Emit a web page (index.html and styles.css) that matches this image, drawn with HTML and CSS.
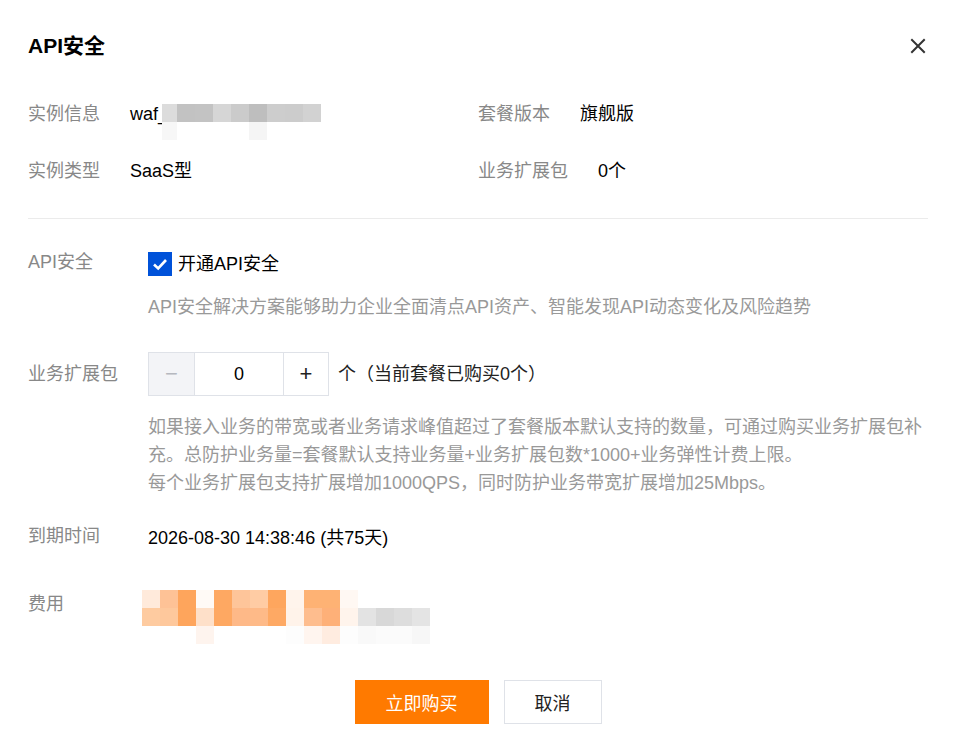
FILE: index.html
```html
<!DOCTYPE html>
<html lang="zh-CN">

<head>
    <meta charset="UTF-8">
    <title>API安全</title>
    <link rel="stylesheet" href="styles.css">
</head>

<body>
    <div class="dialog">
        <div class="dialog-head">
            <h2 class="title">API安全</h2>
            <span class="close">
                <svg width="16" height="16" viewBox="0 0 16 16">
                    <path d="M2 2L14 14M14 2L2 14" stroke="#333" stroke-width="2" stroke-linecap="square" fill="none"/>
                </svg>
            </span>
        </div>

        <!-- 实例信息 -->
        <div class="info">
            <div class="info-item">
                <span class="info-label">实例信息</span>
                <span class="info-value">waf_<span class="mosaic mosaic-id">
                    <i style="background:#dcdcdc"></i><i style="background:#c2c2c2"></i><i style="background:#c3c3c3"></i><i style="background:#d6d6d6"></i><i style="background:#cbcbcb"></i><i style="background:#bebebe"></i><i style="background:#cdcdcd"></i><i style="background:#cccccc"></i><i style="background:#d2d2d2"></i>
                    <i style="background:#f7f7f7"></i><i></i><i></i><i></i><i></i><i style="background:#f5f5f5"></i><i></i><i></i><i></i>
                </span></span>
            </div>
            <div class="info-item">
                <span class="info-label">套餐版本</span>
                <span class="info-value">旗舰版</span>
            </div>
            <div class="info-item">
                <span class="info-label">实例类型</span>
                <span class="info-value">SaaS型</span>
            </div>
            <div class="info-item">
                <span class="info-label">业务扩展包</span>
                <span class="info-value">0个</span>
            </div>
        </div>

        <!-- 表单 -->
        <div class="form">
            <div class="form-row">
                <div class="form-label">API安全</div>
                <div class="form-ctrl">
                    <label class="checkbox">
                        <span class="check-box">
                            <svg width="24" height="24" viewBox="0 0 24 24">
                                <path d="M6 12.5L10.2 16.5L18 8" stroke="#fff" stroke-width="2.6" fill="none"/>
                            </svg>
                        </span>
                        <span>开通API安全</span>
                    </label>
                    <p class="desc desc-api">API安全解决方案能够助力企业全面清点API资产、智能发现API动态变化及风险趋势</p>
                </div>
            </div>

            <div class="form-row row-pack">
                <div class="form-label label-mid">业务扩展包</div>
                <div class="form-ctrl">
                    <div class="stepper-line">
                        <div class="stepper">
                            <span class="step-btn minus">−</span>
                            <span class="step-input">0</span>
                            <span class="step-btn plus">+</span>
                        </div>
                        <span class="unit">个（当前套餐已购买0个）</span>
                    </div>
                    <p class="desc desc-help">如果接入业务的带宽或者业务请求峰值超过了套餐版本默认支持的数量，可通过购买业务扩展包补充。总防护业务量=套餐默认支持业务量+业务扩展包数*1000+业务弹性计费上限。<br>每个业务扩展包支持扩展增加1000QPS，同时防护业务带宽扩展增加25Mbps。</p>
                </div>
            </div>

            <div class="form-row row-expire">
                <div class="form-label">到期时间</div>
                <div class="form-ctrl text">2026-08-30 14:38:46 (共75天)</div>
            </div>

            <div class="form-row row-fee">
                <div class="form-label label-fee">费用</div>
                <div class="form-ctrl">
                    <span class="mosaic mosaic-fee">
                        <i style="background:#ffeadb"></i><i style="background:#fec296"></i><i style="background:#fea55c"></i><i style="background:#fffaf6"></i><i style="background:#fea862"></i><i style="background:#fec59a"></i><i style="background:#ffcca4"></i><i style="background:#fea65e"></i><i style="background:#fff4ec"></i><i style="background:#feb274"></i><i style="background:#feb274"></i><i style="background:#fff8f3"></i><i></i><i></i><i></i><i></i>
                        <i style="background:#fecba0"></i><i style="background:#fec89c"></i><i style="background:#fea55c"></i><i style="background:#fee0c9"></i><i style="background:#fea862"></i><i style="background:#feb988"></i><i style="background:#feba88"></i><i style="background:#fea964"></i><i style="background:#fff3ea"></i><i style="background:#febd8e"></i><i style="background:#feb078"></i><i style="background:#fff4ec"></i><i style="background:#e3e3e3"></i><i style="background:#d8d8d8"></i><i style="background:#dddddd"></i><i style="background:#e4e4e4"></i>
                        <i></i><i></i><i></i><i style="background:#fef4ee"></i><i></i><i></i><i></i><i></i><i style="background:#fdfdfd"></i><i style="background:#fff5ef"></i><i style="background:#ffece0"></i><i style="background:#fdfdfd"></i><i style="background:#f9f9f9"></i><i style="background:#fbfbfb"></i><i style="background:#fbfbfb"></i><i style="background:#f7f7f7"></i>
                    </span>
                </div>
            </div>
        </div>

        <div class="footer">
            <button class="btn btn-primary">立即购买</button>
            <button class="btn btn-default">取消</button>
        </div>
    </div>
</body>

</html>
```

FILE: styles.css
```css
* {
    box-sizing: border-box;
}

body {
    margin: 0;
    background: #fff;
    font-family: "Liberation Sans", "Noto Sans CJK SC", sans-serif;
    font-size: 18px;
    color: #000;
}

.dialog {
    width: 954px;
    padding: 32px 26px 28px 28px;
}

.dialog-head {
    position: relative;
}

.title {
    margin: 0;
    font-size: 21px;
    line-height: 28px;
    font-weight: bold;
    color: #000;
}

.close {
    position: absolute;
    right: 2px;
    top: 6px;
    width: 16px;
    height: 16px;
    cursor: pointer;
}

/* 实例信息两列 */
.info {
    display: grid;
    grid-template-columns: 450px 1fr;
    row-gap: 33px;
    margin-top: 42px;
    padding-bottom: 35px;
    border-bottom: 1px solid #ebebeb;
}

.info-item {
    display: flex;
    height: 24px;
    line-height: 24px;
}

.info-label {
    color: #888;
    margin-right: 30px;
}

.info-value {
    display: flex;
    align-items: flex-start;
    white-space: nowrap;
}

.mosaic {
    display: grid;
    flex: none;
}

.mosaic i {
    display: block;
}

.mosaic-id {
    grid-template-columns: 15px repeat(8, 18px);
    grid-auto-rows: 18px;
    margin-top: 2px;
    margin-left: -6px;
}

.mosaic-fee {
    grid-template-columns: repeat(16, 18px);
    grid-auto-rows: 18px;
    width: 288px;
    margin-left: -6px;
}

/* 表单 */
.form {
    padding-right: 2px;
}

.form-row {
    display: flex;
    margin-top: 33px;
}

.form-label {
    width: 120px;
    flex: none;
    color: #888;
    line-height: 24px;
    margin-top: -2px;
}

.form-ctrl {
    flex: 1;
    line-height: 24px;
}

.checkbox {
    display: flex;
    align-items: center;
    height: 24px;
    cursor: pointer;
}

.check-box {
    width: 24px;
    height: 24px;
    background: #0052d9;
    margin-right: 6px;
}

.check-box svg {
    display: block;
}

.desc {
    margin: 0;
    color: #999;
    line-height: 28px;
}

.desc-api {
    margin-top: 17px;
}

.row-pack {
    margin-top: 31px;
}

.label-mid {
    line-height: 44px;
    margin-top: 0;
}

.stepper-line {
    display: flex;
    align-items: center;
    height: 44px;
}

.stepper {
    display: flex;
    height: 44px;
    border: 1px solid #dfe2e8;
}

.step-btn {
    width: 45px;
    display: flex;
    align-items: center;
    justify-content: center;
    font-size: 22px;
    cursor: pointer;
}

.minus {
    background: #f3f4f7;
    color: #b5b8bf;
}

.plus {
    color: #222;
    border-left: 1px solid #dfe2e8;
}

.step-input {
    width: 89px;
    display: flex;
    align-items: center;
    justify-content: center;
    border-left: 1px solid #dfe2e8;
    color: #000;
}

.unit {
    margin-left: 9px;
    color: #222;
}

.desc-help {
    margin-top: 17px;
    margin-right: -10px;
}

.row-expire {
    margin-top: 29px;
}

.text {
    color: #000;
}

.row-fee {
    margin-top: 40px;
}

.label-fee {
    margin-top: 2px;
}

.footer {
    display: flex;
    justify-content: center;
    gap: 15px;
    margin-top: 36px;
}

.btn {
    height: 44px;
    font-family: inherit;
    font-size: 18px;
    border: 1px solid transparent;
    cursor: pointer;
}

.btn-primary {
    width: 134px;
    background: #ff7a00;
    color: #fff;
}

.btn-default {
    width: 98px;
    background: #fff;
    border-color: #dfe2e8;
    color: #222;
}
```
